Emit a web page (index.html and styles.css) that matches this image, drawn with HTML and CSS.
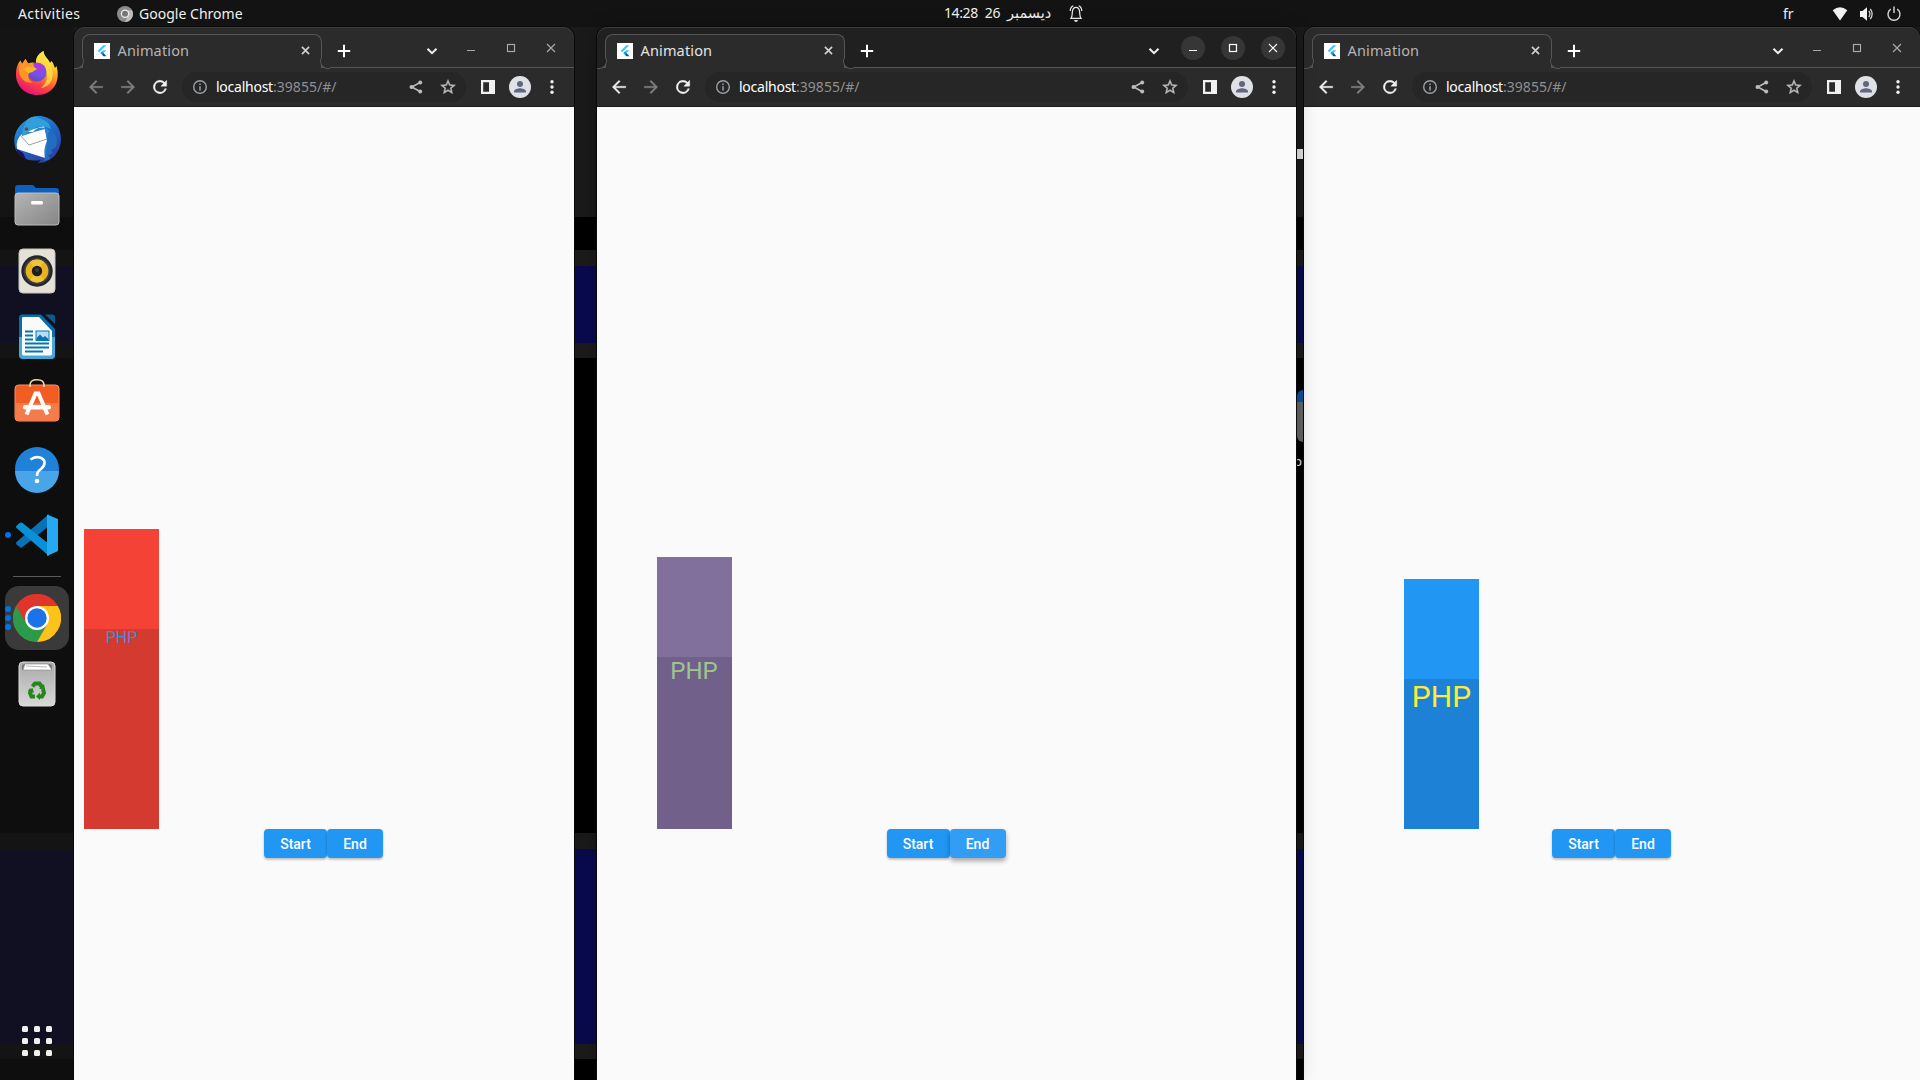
FILE: index.html
```html
<!DOCTYPE html>
<html lang="en">
<head>
<meta charset="utf-8">
<title>Animation</title>
<link rel="stylesheet" href="styles.css">
</head>
<body>
<svg class="sprite" aria-hidden="true">
  <symbol id="flutter" viewBox="0 0 16 16"><rect width="16" height="16" fill="#fff"/><path d="M9.2 2.2H12.4L5.3 9.3 3.7 7.7Z" fill="#47c5fb"/><path d="M9.2 7.3H12.4L9.6 10.1 8 11.7 6.4 10.1Z" fill="#47c5fb"/><path d="M8 8.6 9.6 10.1 8 11.7 6.4 10.1Z" fill="#00a3e8"/><path d="M8 11.7 9.6 10.1 12.4 13.2H9.4Z" fill="#00569e"/></symbol>
  <symbol id="x" viewBox="0 0 16 16"><path d="M4.2 4.2 11.8 11.8M11.8 4.2 4.2 11.8" fill="none" stroke="currentColor" stroke-width="1.8"/></symbol>
  <symbol id="plus" viewBox="0 0 16 16"><path d="M8 1.8V14.2M1.8 8H14.2" fill="none" stroke="currentColor" stroke-width="2"/></symbol>
  <symbol id="chevron" viewBox="0 0 16 16"><path d="M3.5 5.7 8 10.2 12.5 5.7" fill="none" stroke="currentColor" stroke-width="2"/></symbol>
  <symbol id="min" viewBox="0 0 24 24"><path d="M8 14.5H16" stroke="currentColor" stroke-width="1.2"/></symbol>
  <symbol id="max" viewBox="0 0 24 24"><rect x="8.5" y="8.5" width="7" height="7" fill="none" stroke="currentColor" stroke-width="1.2"/></symbol>
  <symbol id="close" viewBox="0 0 24 24"><path d="M8 8 16 16M16 8 8 16" stroke="currentColor" stroke-width="1.2"/></symbol>
  <symbol id="back" viewBox="0 0 24 24"><path d="M21 10.9H7.2L13.5 4.6 12 3 3 12 12 21 13.5 19.4 7.2 13.1H21Z" fill="currentColor" stroke="currentColor" stroke-width=".4"/></symbol>
  <symbol id="reload" viewBox="0 0 24 24"><path d="M17.65 6.35A8 8 0 1 0 19.73 14H17.65A6 6 0 1 1 12 6c1.66 0 3.14.69 4.22 1.78L13 11h7V4Z" fill="currentColor" stroke="currentColor" stroke-width=".5"/></symbol>
  <symbol id="info" viewBox="0 0 16 16"><circle cx="8" cy="8" r="6.3" fill="none" stroke="currentColor" stroke-width="1.4"/><path d="M8 7.2V11.4M8 4.5V6" stroke="currentColor" stroke-width="1.5"/></symbol>
  <symbol id="share" viewBox="0 0 16 16"><path d="M12 3.5 3.8 8 12 12.5" fill="none" stroke="currentColor" stroke-width="1.5"/><circle cx="12.2" cy="3.4" r="2" fill="currentColor"/><circle cx="3.6" cy="8" r="2.1" fill="currentColor"/><circle cx="12.2" cy="12.6" r="2" fill="currentColor"/></symbol>
  <symbol id="star" viewBox="0 0 24 24"><path d="M22 9.24l-7.19-.62L12 2 9.19 8.63 2 9.24l5.46 4.73L5.82 21 12 17.27 18.18 21l-1.63-7.03ZM12 15.4l-3.76 2.27 1-4.28-3.32-2.88 4.38-.38L12 6.1l1.71 4.04 4.38.38-3.32 2.88 1 4.28Z" fill="currentColor" stroke="currentColor" stroke-width=".5"/></symbol>
  <symbol id="panel" viewBox="0 0 16 16"><path d="M1 1H15V15H1ZM3.2 3.2V12.8H9V3.2Z" fill="currentColor" fill-rule="evenodd"/></symbol>
  <symbol id="avatar" viewBox="0 0 22 22"><circle cx="11" cy="11" r="11" fill="#dee1e6"/><circle cx="11" cy="8.1" r="3" fill="#5f6780"/><path d="M5 16.5V15.3C5 13.3 9 12.2 11 12.2S17 13.3 17 15.3V16.5Z" fill="#5f6780"/></symbol>
  <symbol id="dots" viewBox="0 0 16 16"><g fill="currentColor"><circle cx="8" cy="2.8" r="1.7"/><circle cx="8" cy="8" r="1.7"/><circle cx="8" cy="13.2" r="1.7"/></g></symbol>
</svg>

<header class="topbar">
  <span class="activities">Activities</span>
  <span class="app">
    <svg width="16" height="16" viewBox="0 0 16 16"><circle cx="8" cy="8" r="8" fill="#8c8c8c"/><path d="M8 16A8 8 0 0 0 15 4.2H8L11 10Z" fill="#bdbdbd"/><circle cx="8" cy="7.8" r="3.6" fill="#777" stroke="#eee" stroke-width="1.2"/></svg>
    <span class="app-name">Google Chrome</span>
  </span>
  <span class="clock"><span>14:28</span><span>26</span><span class="month" dir="rtl" lang="ar">ديسمبر</span></span>
  <svg class="bell" width="16" height="18" viewBox="0 0 16 18"><path d="M3 13.4C4.6 11.5 4 8.5 4.500 5.8 5 3.4 6.4 2.4 8 2.4S11 3.4 11.5 5.8C12 8.5 11.4 11.5 13 13.4ZM2.2 6Q2.400 2 5.300 .8M13.800 6Q13.600 2 10.700 .8" fill="none" stroke="#eee" stroke-width="1.2"/><path d="M6 15H10Q9.5 17 8 17T6 15Z" fill="#eee"/></svg>
  <span class="lang">fr</span>
  <span class="status">
    <svg width="16" height="16" viewBox="0 0 16 16"><path d="M.7 4.2Q8-1.5 15.3 4.2L8 14.6Z" fill="#f2f2f2"/></svg>
    <svg width="16" height="16" viewBox="0 0 16 16"><path d="M1 5H3.5L8 1.3V14.7L3.5 11H1Z" fill="#f2f2f2"/><path d="M9.8 5Q12 8 9.8 11M11.3 3Q15 8 11.3 13" fill="none" stroke="#d0d0d0" stroke-width="1.3"/></svg>
    <svg width="16" height="16" viewBox="0 0 16 16"><path d="M4.8 3.2A6 6 0 1 0 11.2 3.2M8 .5V7" fill="none" stroke="#d8d8d8" stroke-width="1.4"/></svg>
  </span>
</header>

<main class="desktop">
  <div class="peek-file"></div>
  <div class="peek-folder"></div>
  <span class="peek-label">p</span>

  <nav class="dock">
    <div class="slot">
      <svg width="48" height="48" viewBox="0 0 48 48"><defs><linearGradient id="ff" x1=".8" y1="0" x2=".3" y2="1"><stop offset=".1" stop-color="#fff44f"/><stop offset=".4" stop-color="#ffa229"/><stop offset=".7" stop-color="#ff4440"/><stop offset="1" stop-color="#e0107d"/></linearGradient><radialGradient id="ffp" cx=".6" cy=".15" r=".9"><stop offset="0" stop-color="#b833e1"/><stop offset=".6" stop-color="#7452e8"/><stop offset="1" stop-color="#5b4cb8"/></radialGradient></defs><path d="M24 46C12 46 3 37 3 25.500C3 19 5 14 7.500 11.500L9 15 12.500 10 15 14.500Q19 13 23 14C23 7 27 4 30.500 2 31 8 35 9 37 14L38.500 12C41 15 41 17 42 19L43.500 17C48 33 40 46 24 46Z" fill="url(#ff)"/><path d="M23 14C22 8 27 4 30.500 2 31 8 36 10 38 16 43 29 37 38 28 39 38 31 35 18 23 14Z" fill="#ffe141" opacity=".8"/><circle cx="24" cy="23" r="9.500" fill="url(#ffp)"/><path d="M12.500 10 15 14.500Q19 13 21 16 20 18 24 20H21Q18 21 16 24C14 28 16 32 20 33.500 9 35 3 25 7.500 11.500L9 15Z" fill="#ff9526"/><path d="M10 20Q17 16 24 20 20 23 16 24 12 22 10 20Z" fill="#ffb52b"/></svg>
    </div>
    <div class="slot">
      <svg width="48" height="48" viewBox="0 0 48 48"><defs><linearGradient id="tb" x1=".2" y1="0" x2=".8" y2="1"><stop offset="0" stop-color="#2695d8"/><stop offset=".5" stop-color="#1f66c4"/><stop offset="1" stop-color="#303a9c"/></linearGradient></defs><path d="M24 1C37 0 48 10 48 24 48 37 38 48 25 48L28 45Q10 48 3 35C-3 19 8 4 24 1Z" fill="url(#tb)"/><path d="M3 33Q5 42 13 44L10 38Z" fill="#24105a"/><path d="M11 17 31 11 35 28Q33 36 32 43L4 34Q2 24 11 17Z" fill="#fff"/><path d="M7 20 16 30 34 24" fill="none" stroke="#9aa0a8" stroke-width="1"/><path d="M9 21Q7 12 15 7 10 18 20 17 26 10 35 14 44 25 32 44 30 34 34 26L32 14Q20 17 9 21Z" fill="#2486d5"/><path d="M15 4Q21-1 28 4 36 6 38 14 28 9 22 13 14 17 9 21 10 10 15 4Z" fill="#319fdc"/><path d="M35 17C44 17 45 23 43 32L38 35 40 38 35 40 37 44 31 46Q34 34 34 25Z" fill="#236dc0"/><circle cx="13.500" cy="14" r="1.800" fill="#6b4b2b"/></svg>
    </div>
    <div class="slot">
      <svg width="48" height="48" viewBox="0 0 48 48"><defs><linearGradient id="fg" x2="1" y2="1"><stop stop-color="#b5b5b5"/><stop offset="1" stop-color="#858585"/></linearGradient></defs><path d="M2 11V7Q2 4 5 4H19Q21 4 22 6L23 7H43Q46 7 46 10V20H2Z" fill="#0f60bd"/><rect x="2" y="12" width="44" height="32" rx="3" fill="url(#fg)" stroke="#bdbdbd"/><rect x="18" y="20" width="12" height="3.500" rx="1.500" fill="#fff"/></svg>
    </div>
    <div class="slot">
      <svg width="48" height="48" viewBox="0 0 48 48"><rect x="6" y="2" width="36" height="44" rx="4" fill="#e5e1d8" stroke="#c9c5bb"/><circle cx="24" cy="24" r="15.700" fill="#24262e"/><circle cx="24" cy="24" r="13.200" fill="#3d3d42"/><circle cx="24" cy="24" r="11.400" fill="#e6b21d"/><path d="M24 24 17 33A11.400 11.400 0 0 0 31 33ZM24 24 17 15A11.400 11.400 0 0 1 31 15Z" fill="#eec43a"/><circle cx="24" cy="24" r="5.200" fill="#1d1d1d"/><circle cx="24" cy="23" r="2" fill="#3b3b3b"/></svg>
    </div>
    <div class="slot">
      <svg width="48" height="48" viewBox="0 0 48 48"><path d="M9 1.500H28L42 16V42Q42 46 38 46H10Q6 46 6 42V5Q6 1.500 9 1.500Z" fill="#0b6ba5"/><path d="M6 24H42V42Q42 46 38 46H10Q6 46 6 42Z" fill="#45a8d8"/><path d="M32 1.500H39Q42 1.500 42 4V11Z" fill="#0a5c8b"/><path d="M10 4H26L39 18V41Q39 42.500 37 42.500H11Q9 42.500 9 41V5Z" fill="#fafafa"/><path d="M12 18.500H20M12 22.500H20M12 26.500H20M12 30.500H36M12 34.500H36M12 38.500H30" stroke="#0876ad" stroke-width="2"/><rect x="23" y="18" width="13" height="9.500" fill="#b9def3" stroke="#0876ad"/><path d="M23.500 27V25L27 21.500 30 24.500 32 23 35.500 26V27Z" fill="#0876ad"/></svg>
    </div>
    <div class="slot">
      <svg width="48" height="48" viewBox="0 0 48 48"><rect x="2" y="6" width="44" height="36" rx="3.500" fill="#f15d22" stroke="#ff9161"/><path d="M2.500 24H45.500V39Q45.500 41.500 43 41.500H5Q2.500 41.500 2.500 39Z" fill="#f47b4b"/><path d="M17 8V6Q17 .8 24 .8T31 6V8" fill="none" stroke="#f6d9a1" stroke-width="1.600"/><path d="M13.500 35.500 22.500 14.500H25.500L34.500 35.500" fill="none" stroke="#fff" stroke-width="4"/><rect x="10" y="26" width="28" height="4.500" rx="2.200" fill="#fff"/></svg>
    </div>
    <div class="slot">
      <svg width="48" height="48" viewBox="0 0 48 48"><circle cx="24" cy="24" r="22" fill="#1f82d8"/><path d="M2 26A22 22 0 0 0 46 26Z" fill="#48a5e7"/><path d="M17.500 14.500Q22 11 27 12.500C33 14.500 32.500 20 28.500 23.500 25.500 26 24 27 24 31" fill="none" stroke="#fff" stroke-width="2.700"/><circle cx="24" cy="36" r="2.300" fill="#fff"/></svg>
    </div>
    <div class="slot">
      <span class="running"><i></i></span>
      <svg width="48" height="48" viewBox="0 0 48 48"><path d="M3.500 31Q2.500 32 3.500 33.300L6.500 36Q8 37 9.500 36L36 15V3Z" fill="#0872b8"/><path d="M3.500 17Q2.500 16 3.500 14.700L6.500 12Q8 11 9.500 12L36 33V45Z" fill="#0990d6"/><path d="M34 3.500 45 8V40L34 45Z" fill="#27a8f2"/></svg>
    </div>
    <hr class="divider">
    <div class="slot slot-active">
      <span class="running"><i></i><i></i><i></i></span>
      <svg width="48" height="48" viewBox="0 0 48 48"><circle cx="24" cy="24" r="24" fill="#e0342b"/><path d="M3.200 12A24 24 0 0 0 24 48L34.400 30 24 24Z" fill="#2a9b49"/><path d="M24 48A24 24 0 0 0 44.800 12H24V24L34.400 30Z" fill="#fcc419"/><path d="M3.200 12 13.600 30 24 24 24 12H44.800A24 24 0 0 0 3.200 12Z" fill="#df352b"/><circle cx="24" cy="24" r="12" fill="#fff"/><circle cx="24" cy="24" r="9.700" fill="#1a73e8"/></svg>
    </div>
    <div class="slot">
      <svg width="48" height="48" viewBox="0 0 48 48"><defs><linearGradient id="tr" y2="1" x2="0"><stop stop-color="#aaa"/><stop offset="1" stop-color="#d8d8d8"/></linearGradient></defs><rect x="6" y="2" width="36" height="44" rx="4" fill="url(#tr)" stroke="#ddd"/><path d="M9 10V7Q9 4 12 4H36Q39 4 39 7V10Z" fill="#777"/><path d="M10 10 12 4H35L39 10Z" fill="#fff" stroke="#888" stroke-width=".6"/><path d="M13 6 34 7" stroke="#888" stroke-width=".6"/><g fill="none" stroke="#26851b" stroke-width="4"><path d="M19.500 26.500 22 23.500H26.500L29 27"/><path d="M30 29 31 33 29 36.500H26"/><path d="M22 36.500H18.500L17 33 18.500 29"/></g><path d="M26 29H32L31 24ZM27 32.500V40L23 36.500ZM14.500 30.500 19.500 28 21 33Z" fill="#26851b"/></svg>
    </div>
    <div class="apps"><i></i><i></i><i></i><i></i><i></i><i></i><i></i><i></i><i></i></div>
  </nav>

  <section class="window window-one">
    <div class="tabstrip">
      <div class="tab"><svg class="fav"><use href="#flutter"/></svg><span class="title">Animation</span><svg class="ic16"><use href="#x"/></svg></div>
      <svg class="ic16 new-tab"><use href="#plus"/></svg>
      <div class="controls"><svg class="ic16 chev"><use href="#chevron"/></svg><svg class="ctl"><use href="#min"/></svg><svg class="ctl"><use href="#max"/></svg><svg class="ctl"><use href="#close"/></svg></div>
    </div>
    <div class="toolbar">
      <svg class="ic18 off"><use href="#back"/></svg><svg class="ic18 off flip"><use href="#back"/></svg><svg class="ic20"><use href="#reload"/></svg>
      <div class="omnibox"><svg class="ic16 info"><use href="#info"/></svg><span class="url"><b>localhost</b>:39855/#/</span><svg class="ic16 share"><use href="#share"/></svg><svg class="ic18"><use href="#star"/></svg></div>
      <svg class="ic16"><use href="#panel"/></svg><svg class="ic22"><use href="#avatar"/></svg><svg class="ic16"><use href="#dots"/></svg>
    </div>
    <div class="page">
      <div class="stage"><div class="box box-red"><span>PHP</span></div></div>
      <div class="buttons"><button class="start">Start</button><button class="end">End</button></div>
    </div>
  </section>

  <section class="window window-three">
    <div class="tabstrip">
      <div class="tab"><svg class="fav"><use href="#flutter"/></svg><span class="title">Animation</span><svg class="ic16"><use href="#x"/></svg></div>
      <svg class="ic16 new-tab"><use href="#plus"/></svg>
      <div class="controls"><svg class="ic16 chev"><use href="#chevron"/></svg><svg class="ctl"><use href="#min"/></svg><svg class="ctl"><use href="#max"/></svg><svg class="ctl"><use href="#close"/></svg></div>
    </div>
    <div class="toolbar">
      <svg class="ic18"><use href="#back"/></svg><svg class="ic18 off flip"><use href="#back"/></svg><svg class="ic20"><use href="#reload"/></svg>
      <div class="omnibox"><svg class="ic16 info"><use href="#info"/></svg><span class="url"><b>localhost</b>:39855/#/</span><svg class="ic16 share"><use href="#share"/></svg><svg class="ic18"><use href="#star"/></svg></div>
      <svg class="ic16"><use href="#panel"/></svg><svg class="ic22"><use href="#avatar"/></svg><svg class="ic16"><use href="#dots"/></svg>
    </div>
    <div class="page">
      <div class="stage"><div class="box box-blue"><span>PHP</span></div></div>
      <div class="buttons"><button class="start">Start</button><button class="end">End</button></div>
    </div>
  </section>

  <section class="window window-two focused">
    <div class="tabstrip">
      <div class="tab"><svg class="fav"><use href="#flutter"/></svg><span class="title">Animation</span><svg class="ic16"><use href="#x"/></svg></div>
      <svg class="ic16 new-tab"><use href="#plus"/></svg>
      <div class="controls"><svg class="ic16 chev"><use href="#chevron"/></svg><svg class="ctl"><use href="#min"/></svg><svg class="ctl"><use href="#max"/></svg><svg class="ctl"><use href="#close"/></svg></div>
    </div>
    <div class="toolbar">
      <svg class="ic18"><use href="#back"/></svg><svg class="ic18 off flip"><use href="#back"/></svg><svg class="ic20"><use href="#reload"/></svg>
      <div class="omnibox"><svg class="ic16 info"><use href="#info"/></svg><span class="url"><b>localhost</b>:39855/#/</span><svg class="ic16 share"><use href="#share"/></svg><svg class="ic18"><use href="#star"/></svg></div>
      <svg class="ic16"><use href="#panel"/></svg><svg class="ic22"><use href="#avatar"/></svg><svg class="ic16"><use href="#dots"/></svg>
    </div>
    <div class="page">
      <div class="stage"><div class="box box-purple"><span>PHP</span></div></div>
      <div class="buttons"><button class="start">Start</button><button class="end hover">End</button></div>
    </div>
  </section>
</main>
</body>
</html>
```
FILE: styles.css
```css
* { box-sizing: border-box; }

body {
  margin: 0;
  width: 1920px;
  height: 1080px;
  overflow: hidden;
  display: flex;
  flex-direction: column;
  background: #131313;
  font-family: "Noto Sans", "Open Sans", sans-serif;
}

svg { display: block; flex: none; }
.sprite { position: absolute; width: 0; height: 0; }

/* Top panel */
.topbar {
  height: 27px;
  flex: none;
  display: grid;
  grid-template-columns: 117px 827px 124px 715px 1fr auto;
  align-items: center;
  background: #131313;
  color: #f0f0f0;
  font-size: 14px;
  line-height: 20px;
  white-space: nowrap;
}
.activities { padding-left: 18px; letter-spacing: 0.4px; }
.app { display: flex; align-items: center; gap: 6px; }
.app-name { letter-spacing: 0.02px; }
.clock { display: flex; align-items: center; gap: 7px; letter-spacing: -0.4px; }
.clock > span { position: relative; top: -1px; }
.month { font-family: "DejaVu Sans", sans-serif; font-size: 14.5px; letter-spacing: 0; }
.status { display: flex; gap: 11px; padding-right: 18px; }

/* Desktop with the banded wallpaper */
.desktop {
  position: relative;
  flex: 1;
  background: linear-gradient(#1a1a1a 190px, #000 190px, #000 223px, #1d1a1a 223px, #1d1a1a 239px,
    #090950 239px, #090950 316px, #1d1a1a 316px, #1d1a1a 331px, #000 331px, #000 806px,
    #1a1a1a 806px, #1a1a1a 822px, #090950 822px, #090950 1017px, #1d1a1a 1017px, #1d1a1a 1032px, #000 1032px);
}
.peek-file { position: absolute; left: 1297px; top: 122px; width: 7px; height: 10px; background: #e0e2e3; }
.peek-folder {
  position: absolute; left: 1297px; top: 363px; width: 20px; height: 52px;
  border-radius: 6px;
  background: linear-gradient(#0c52a0 12px, #666 12px);
}
.peek-label { position: absolute; left: 1294px; top: 425px; font-size: 13px; line-height: 18px; color: #eee; }

/* Dock */
.dock {
  width: 74px;
  height: 100%;
  padding-top: 12.6px;
  display: flex;
  flex-direction: column;
  align-items: center;
  background: rgba(19, 19, 19, 0.75);
}
.slot {
  position: relative;
  width: 64px;
  height: 66px;
  flex: none;
  display: flex;
  align-items: center;
  justify-content: center;
}
.slot-active { height: 64px; margin: 9px 0 1px; border-radius: 14px; background: #3a3a3a; }
.divider { width: 48px; height: 1px; margin: 8.4px 0 0; border: 0; background: #5a5a5a; }
.running {
  position: absolute; left: 0; top: 0;
  height: 100%;
  display: flex; flex-direction: column; justify-content: center; gap: 3px;
}
.running i { width: 6px; height: 6px; border-radius: 50%; background: #0073e5; }
.apps {
  margin: auto 0 24px;
  display: grid;
  grid-template-columns: repeat(3, 6px);
  gap: 6px;
}
.apps i { height: 6px; border-radius: 1.5px; background: #f0f0ee; }

/* Browser windows */
.window {
  position: absolute;
  top: 0;
  height: 1053px;
  display: flex;
  flex-direction: column;
  border-radius: 11px 11px 0 0;
  background: #2b2b2b;
  box-shadow: 0 0 0 1px #090909;
}
.window-one { left: 74px; width: 500px; }
.window-two { left: 597px; width: 699px; box-shadow: 0 0 0 1px #090909, 0 3px 20px rgba(0, 0, 0, 0.28); }
.window-three { left: 1304px; width: 616px; }

.tabstrip {
  height: 41px;
  flex: none;
  display: flex;
  align-items: flex-start;
  padding: 7px 11px 0 8px;
  border-radius: 11px 11px 0 0;
  border-bottom: 1px solid #555;
  box-shadow: inset 0 1px #3c3c3c;
  color: #e8e8e8;
}
.focused .tabstrip { background: #202020; }
.tab {
  position: relative;
  width: 240px;
  height: 34px;
  padding: 0 8px 2px 11px;
  display: flex;
  align-items: center;
  border: 1px solid #555;
  border-bottom: 0;
  border-radius: 8px 8px 0 0;
  background: #2b2b2b;
  color: #b4b4b4;
}
.tab::before, .tab::after {
  content: "";
  position: absolute;
  bottom: -1px;
  width: 9px;
  height: 9px;
  border-bottom: 1px solid #555;
  background: #2b2b2b;
}
.tab::before { left: -9px; border-right: 1px solid #555; border-bottom-right-radius: 8px; }
.tab::after { right: -9px; border-left: 1px solid #555; border-bottom-left-radius: 8px; }
.focused .tab::before, .focused .tab::after { background: #202020; }
.focused .tab { color: #e4e4e4; }
.title { flex: 1; margin-left: 7.5px; font-size: 14.5px; line-height: 20px; letter-spacing: 0.15px; position: relative; top: -0.5px; }
.tab .ic16 { width: 15px; height: 15px; color: #d0d0d0; }
.fav { width: 16px; height: 16px; }
.new-tab { margin: 9px 0 0 14px; color: #fff; }
.controls { margin-left: auto; display: flex; gap: 16px; color: #a8a8a8; }
.chev { margin: 9px 3px 0 0; color: #f0f0f0; }
.ctl { width: 24px; height: 24px; margin-top: 2px; border-radius: 50%; }
.focused .ctl { background: #363636; color: #fff; }

.toolbar {
  height: 39px;
  flex: none;
  display: flex;
  align-items: center;
  padding: 0 14px 0 13px;
  border-bottom: 1px solid #1c1c1c;
  color: #f1f1f1;
}
.ic16 { width: 16px; height: 16px; }
.ic18 { width: 18px; height: 18px; }
.ic20 { width: 20px; height: 20px; }
.ic22 { width: 22px; height: 22px; }
.off { color: #808080; }
.flip { transform: scaleX(-1); }
.toolbar > .ic18 + .ic18 { margin-left: 14px; }
.toolbar > .ic20 { margin-left: 13px; }
.omnibox {
  flex: 1;
  height: 30px;
  margin: 0 14px 0 12px;
  padding: 0 9px 0 10px;
  display: flex;
  align-items: center;
  border-radius: 15px;
  background: #262626;
  color: #bcbcbc;
}
.info { color: #9aa0a6; }
.url { flex: 1; margin-left: 8px; font-size: 14px; line-height: 20px; letter-spacing: 0.05px; color: #8e9092; }
.url b { font-weight: 400; letter-spacing: -0.25px; color: #fff; }
.share { margin-right: 15px; }
.toolbar > .ic22 { margin: 0 13px; }

/* Flutter page */
.page {
  flex: 1;
  display: flex;
  flex-direction: column;
  background: #fafafa;
  font-family: Roboto, sans-serif;
}
.stage { height: 722.4px; flex: none; display: flex; align-items: flex-end; }
.box { width: 75px; padding-top: 100px; text-align: center; line-height: 1.172; }
.box span { display: block; height: 100%; }
.box-red { margin-left: 10px; height: 300px; background: #f44336; color: #3a8bdb; font-size: 16px; }
.box-red span { background: #d43a2f; }
.box-purple { margin-left: 59.5px; height: 272.4px; background: #82709c; color: #9dc68d; font-size: 24px; }
.box-purple span { background: #71618a; }
.box-blue { margin-left: 100px; height: 250px; background: #2196f3; color: #ffeb3b; font-size: 30px; }
.box-blue span { background: #1d82d5; }

.buttons { display: flex; justify-content: center; padding-right: 1px; }
.buttons button {
  height: 28.5px;
  padding: 0;
  border: 0;
  border-radius: 4px;
  background: #2196f3;
  color: #fff;
  font: 500 14px/28px Roboto, sans-serif;
  box-shadow: 0 2px 2px rgba(0, 0, 0, 0.14), 0 1px 3px rgba(0, 0, 0, 0.14);
}
.buttons .start { width: 63px; }
.buttons .end { width: 56px; }
.buttons .hover { background: #329df4; box-shadow: 0 3px 5px rgba(0, 0, 0, 0.35); }
```
